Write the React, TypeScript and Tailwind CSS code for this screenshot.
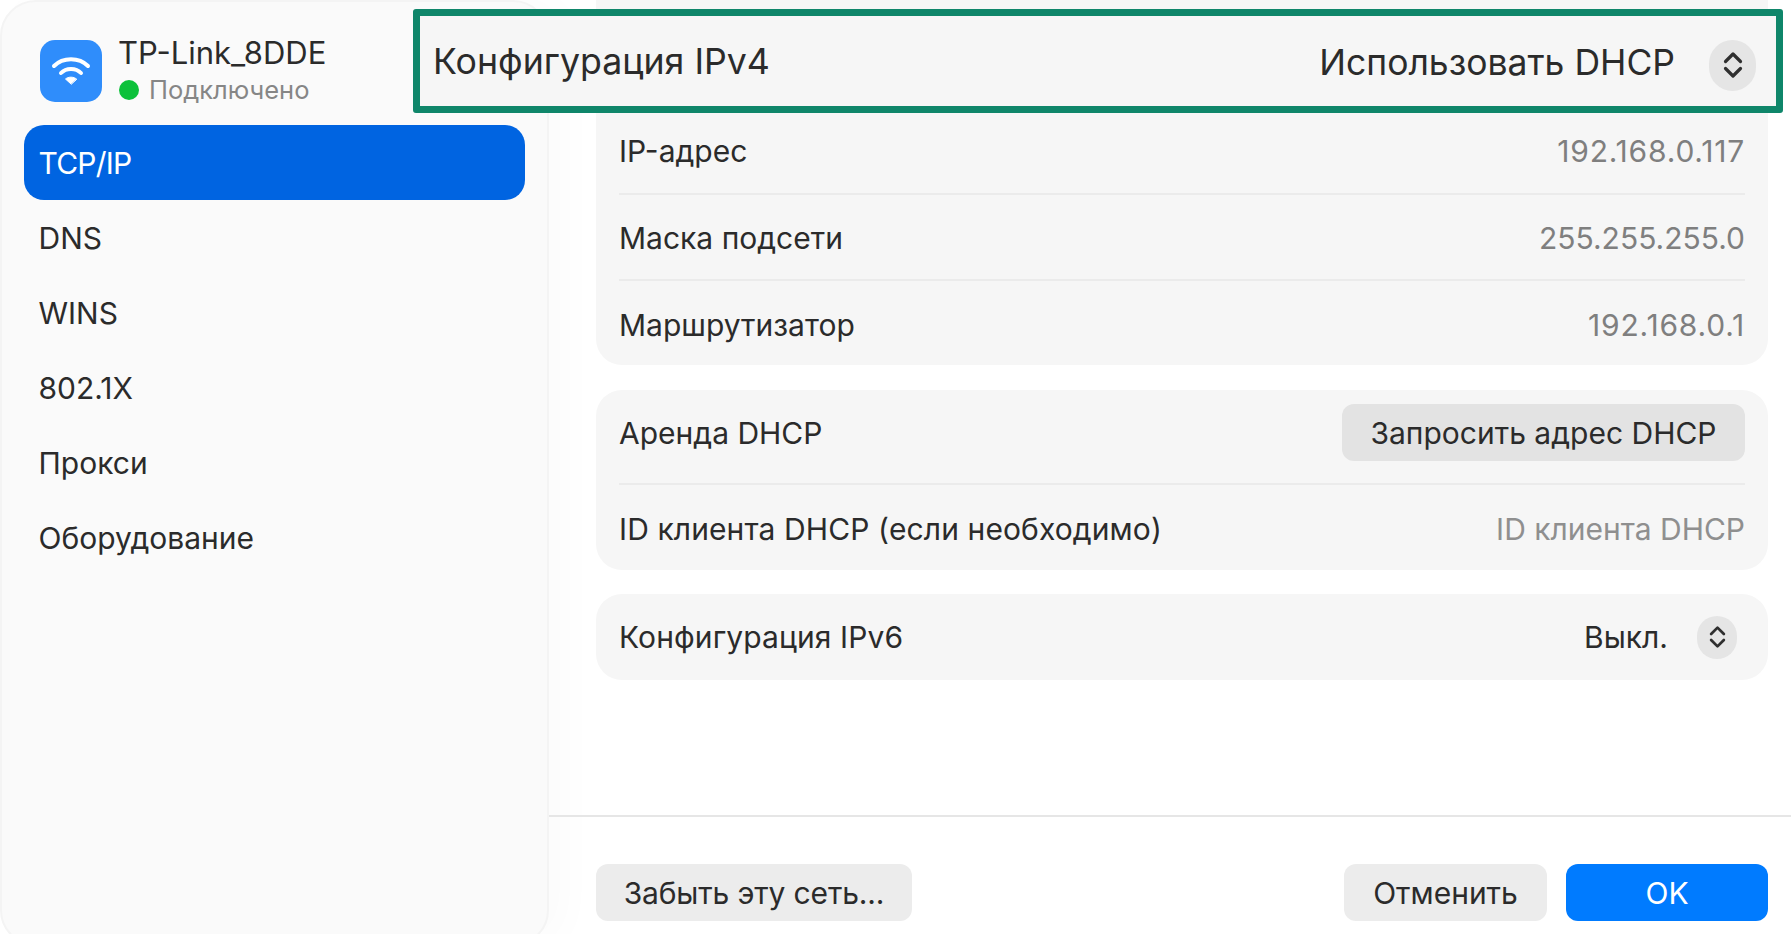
import React from "react";

const font = { fontFamily: '"Inter", "Liberation Sans", sans-serif' };

function Chevrons({ className }: { className: string }) {
  return (
    <svg viewBox="0 0 20 28" className={className} fill="none" stroke="#2f2f2f" strokeWidth="3.2" strokeLinecap="round" strokeLinejoin="round">
      <path d="M2.5 10.5 L10 3 L17.5 10.5" />
      <path d="M2.5 17.5 L10 25 L17.5 17.5" />
    </svg>
  );
}

function Row({ label, value, valueClass, last }: { label: string; value: string; valueClass: string; last?: boolean }) {
  return (
    <div className={`flex items-center justify-between h-[86.5px] pt-[3px] ${last ? "" : "border-b-2 border-[#ebebeb]"}`}>
      <span>{label}</span>
      <span className={`text-[#7f7f7f] ${valueClass}`}>{value}</span>
    </div>
  );
}

export default function App() {
  const items = ["DNS", "WINS", "802.1X", "Прокси", "Оборудование"];
  return (
    <div style={font} className="relative flex w-[1791px] h-[934px] overflow-hidden bg-white text-[30px] text-[#2b2b2b]">
      <aside className="w-[549px] h-[946px] shrink-0 rounded-[36px] border-2 border-[#f4f4f4] bg-[#fafafa] pl-[22px] pr-[22px] pt-[34px] shadow-[16px_0_40px_rgba(0,0,0,0.02)]">
        <div className="flex items-start h-[89px] pl-[16px]">
          <div className="w-[62px] h-[62px] mt-[4px] rounded-[15px] bg-[#2f8dfb] flex items-center justify-center">
            <svg viewBox="0 0 40 32" className="w-[40px] h-[32px]" fill="none" stroke="white" strokeLinecap="round">
              <path d="M3 11 C12 2 28 2 37 11" strokeWidth="4" />
              <path d="M10 18 C15 12.5 25 12.5 30 18" strokeWidth="4" />
              <path d="M20 29 L14.5 24 C17.5 21.5 22.5 21.5 25.5 24 Z" fill="white" stroke="white" strokeWidth="1" strokeLinejoin="round" />
            </svg>
          </div>
          <div className="ml-[16px] flex flex-col -mt-[1px]">
            <div className="leading-[36px] h-[36px] text-[31px]">TP-Link_8DDE</div>
            <div className="flex items-center mt-[1px] text-[25.5px] leading-[36px] text-[#868686]">
              <span className="w-[20px] h-[20px] rounded-full bg-[#0cc13a] ml-[1px] mr-[10px]" />
              Подключено
            </div>
          </div>
        </div>
        <div className="h-[75px] w-[501px] rounded-[20px] bg-[#0064e1] text-white flex items-center pl-[14.5px] pt-[2px] tracking-[-0.8px]">TCP/IP</div>
        {items.map((t) => (
          <div key={t} className="h-[75px] flex items-center pl-[14.5px] pt-[2px]">{t}</div>
        ))}
      </aside>

      <main className="flex-1 flex flex-col min-w-0">
        <div className="flex-1 pl-[47px] pr-[23px]">
          <div className="h-[365px] pt-[108px] pl-[23px] pr-[23px] rounded-b-[26px] bg-[#f6f6f6]">
            <Row label="IP-адрес" value="192.168.0.117" valueClass="tracking-[0.8px]" />
            <Row label="Маска подсети" value="255.255.255.0" valueClass="tracking-[0px]" />
            <Row label="Маршрутизатор" value="192.168.0.1" valueClass="tracking-[0.8px]" last />
          </div>
          <div className="mt-[25px] h-[180px] pl-[23px] pr-[23px] rounded-[26px] bg-[#f6f6f6]">
            <div className="h-[95px] pb-[9px] flex items-center justify-between border-b-2 border-[#ebebeb]">
              <span className="pt-[3px]">Аренда DHCP</span>
              <button className="h-[57px] w-[403px] rounded-[12px] bg-[#e3e3e3] pt-[2px]">Запросить адрес DHCP</button>
            </div>
            <div className="h-[85px] pt-[3px] flex items-center justify-between">
              <span className="tracking-[0.1px]">ID клиента DHCP (если необходимо)</span>
              <span className="text-[#8f8f8f]">ID клиента DHCP</span>
            </div>
          </div>
          <div className="mt-[24px] h-[86px] pl-[23px] pr-[31px] rounded-[26px] bg-[#f6f6f6] flex items-center justify-between">
            <span className="tracking-[0.1px]">Конфигурация IPv6</span>
            <div className="flex items-center">
              <span>Выкл.</span>
              <span className="ml-[29px] w-[40px] h-[43px] rounded-full bg-[#e5e5e5] flex items-center justify-center">
                <Chevrons className="w-[17px] h-[26px]" />
              </span>
            </div>
          </div>
        </div>
        <div className="h-[119px] shrink-0 border-t-2 border-[#e6e6e6] pt-[47px] pl-[47px] pr-[23px] flex items-start justify-between">
          <button className="h-[57px] w-[316px] rounded-[12px] bg-[#ececec] pt-[1px] tracking-[-0.15px]">Забыть эту сеть...</button>
          <div className="flex gap-[19px]">
            <button className="h-[57px] w-[203px] rounded-[12px] bg-[#ececec] pt-[1px]">Отменить</button>
            <button className="h-[57px] w-[202px] rounded-[12px] bg-[#007bff] text-white pt-[1px]">OK</button>
          </div>
        </div>
      </main>

      <div className="absolute left-[413px] top-[9px] w-[1370px] h-[104px] border-[7px] rounded-[3px] border-[#0f866a] bg-[#f6f6f6] flex items-center justify-between pl-[13px] pr-[20px]">
        <span className="text-[35.7px] mt-[2px]">Конфигурация IPv4</span>
        <div className="flex items-center">
          <span className="text-[35.5px] mt-[3px]">Использовать DHCP</span>
          <span className="ml-[34px] mt-[8px] w-[47px] h-[51px] rounded-full bg-[#e5e5e5] flex items-center justify-center">
            <Chevrons className="w-[20px] h-[30px]" />
          </span>
        </div>
      </div>
    </div>
  );
}
